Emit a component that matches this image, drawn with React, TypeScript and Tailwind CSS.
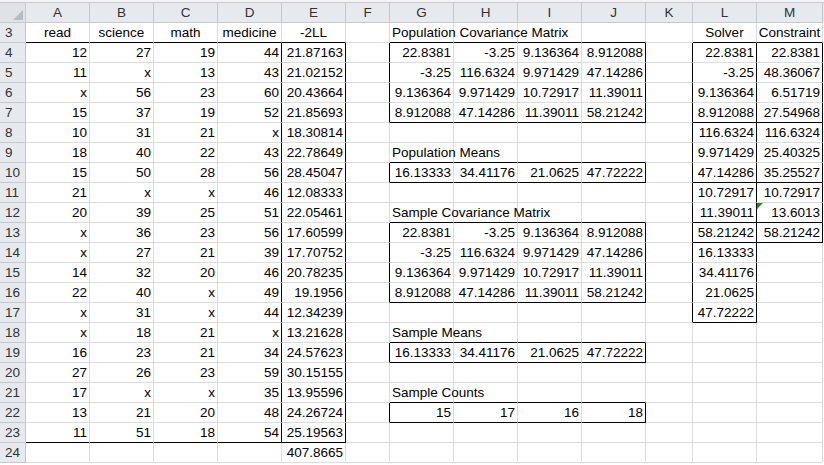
import React from "react";

const COLS = ["A","B","C","D","E","F","G","H","I","J","K","L","M"];
const WIDTHS = [64,64,64,64,64,44,64,64,64,64,47,64,66];

type Cell = { v: string; a?: "l" | "c" | "r" };
const data: Record<number, Record<string, Cell>> = {};
const set = (r: number, c: string, v: string, a: "l" | "c" | "r" = "r") => {
  data[r] = data[r] || {};
  data[r][c] = { v, a };
};

["read","science","math","medicine","-2LL"].forEach((v, i) => set(3, COLS[i], v, "c"));
set(3, "G", "Population Covariance Matrix", "l");
set(3, "L", "Solver", "c");
set(3, "M", "Constraint", "c");

const main = [
  ["12","27","19","44","21.87163"],["11","x","13","43","21.02152"],["x","56","23","60","20.43664"],
  ["15","37","19","52","21.85693"],["10","31","21","x","18.30814"],["18","40","22","43","22.78649"],
  ["15","50","28","56","28.45047"],["21","x","x","46","12.08333"],["20","39","25","51","22.05461"],
  ["x","36","23","56","17.60599"],["x","27","21","39","17.70752"],["14","32","20","46","20.78235"],
  ["22","40","x","49","19.1956"],["x","31","x","44","12.34239"],["x","18","21","x","13.21628"],
  ["16","23","21","34","24.57623"],["27","26","23","59","30.15155"],["17","x","x","35","13.95596"],
  ["13","21","20","48","24.26724"],["11","51","18","54","25.19563"],
];
main.forEach((row, i) => row.forEach((v, j) => set(4 + i, COLS[j], v)));
set(24, "E", "407.8665");

const cov = [
  ["22.8381","-3.25","9.136364","8.912088"],["-3.25","116.6324","9.971429","47.14286"],
  ["9.136364","9.971429","10.72917","11.39011"],["8.912088","47.14286","11.39011","58.21242"],
];
const GJ = ["G","H","I","J"];
cov.forEach((row, i) => row.forEach((v, j) => { set(4 + i, GJ[j], v); set(13 + i, GJ[j], v); }));
const means = ["16.13333","34.41176","21.0625","47.72222"];
means.forEach((v, j) => { set(10, GJ[j], v); set(19, GJ[j], v); });
["15","17","16","18"].forEach((v, j) => set(22, GJ[j], v));
set(9, "G", "Population Means", "l");
set(12, "G", "Sample Covariance Matrix", "l");
set(18, "G", "Sample Means", "l");
set(21, "G", "Sample Counts", "l");

["22.8381","-3.25","9.136364","8.912088","116.6324","9.971429","47.14286","10.72917","11.39011","58.21242","16.13333","34.41176","21.0625","47.72222"].forEach((v, i) => set(4 + i, "L", v));
["22.8381","48.36067","6.51719","27.54968","116.6324","25.40325","35.25527","10.72917","13.6013","58.21242"].forEach((v, i) => set(4 + i, "M", v));

function blackRight(r: number, c: string) {
  if ((c === "D" || c === "E") && r >= 4 && r <= 23) return true;
  if (c === "F" || c === "J") {
    if ((r >= 4 && r <= 7) || r === 10 || (r >= 13 && r <= 16) || r === 19 || r === 22) return true;
  }
  if ((c === "K" || c === "L") && r >= 4 && r <= 17) return true;
  if (c === "M" && r >= 4 && r <= 13) return true;
  return false;
}
function blackBottom(r: number, c: string) {
  const i = COLS.indexOf(c);
  if (i <= 4 && (r === 3 || r === 23)) return true;
  if (GJ.includes(c) && [3,7,9,10,12,16,18,19,21,22].includes(r)) return true;
  if (c === "L" && [3,7,10,12,13,17].includes(r)) return true;
  if (c === "M" && [3,7,10,12,13].includes(r)) return true;
  return false;
}

export default function App() {
  const rows = Array.from({ length: 22 }, (_, i) => 3 + i);
  return (
    <div className="w-[824px] h-[465px] overflow-hidden bg-white text-black text-[13.5px] leading-none" style={{ fontFamily: '"Liberation Sans", Arial, sans-serif' }}>
      <div className="h-[3px] bg-[#f3f3f3] border-b border-[#c8ccd1]" />
      <div className="flex h-[20px] bg-[#e6e9ee] text-[#333]">
        <div className="w-[26px] shrink-0 border-r border-b border-[#c5c9cf] bg-[#dfe3e8] relative">
          <div className="absolute right-[2px] bottom-[2px] w-0 h-0 border-l-[10px] border-l-transparent border-b-[10px] border-b-[#b8bcc2]" />
        </div>
        {COLS.map((c, i) => (
          <div key={c} className="shrink-0 flex items-center justify-center border-r border-b border-[#c5c9cf]" style={{ width: WIDTHS[i] }}>{c}</div>
        ))}
      </div>
      {rows.map((r) => (
        <div key={r} className="flex h-[20px]">
          <div className="w-[26px] shrink-0 flex items-center pl-[5px] bg-[#e6e9ee] text-[#333] border-r border-b border-[#c5c9cf]">{r}</div>
          {COLS.map((c, i) => {
            const cell = data[r]?.[c];
            const br = blackRight(r, c) ? "border-r-black" : "border-r-[#dadcdd]";
            const bb = blackBottom(r, c) ? "border-b-black" : "border-b-[#dadcdd]";
            const al = cell?.a === "l" ? "justify-start pl-[2px]" : cell?.a === "c" ? "justify-center" : "justify-end pr-[2px]";
            return (
              <div key={c} className={`shrink-0 relative flex items-center whitespace-nowrap border-r border-b ${br} ${bb} ${al}`} style={{ width: WIDTHS[i] }}>
                {r === 12 && c === "M" && (
                  <div className="absolute left-0 top-0 w-0 h-0 border-t-[6px] border-t-[#1f8a1f] border-r-[6px] border-r-transparent" />
                )}
                {cell ? <span className={cell.a === "l" ? "relative z-10" : ""}>{cell.v}</span> : null}
              </div>
            );
          })}
        </div>
      ))}
    </div>
  );
}
